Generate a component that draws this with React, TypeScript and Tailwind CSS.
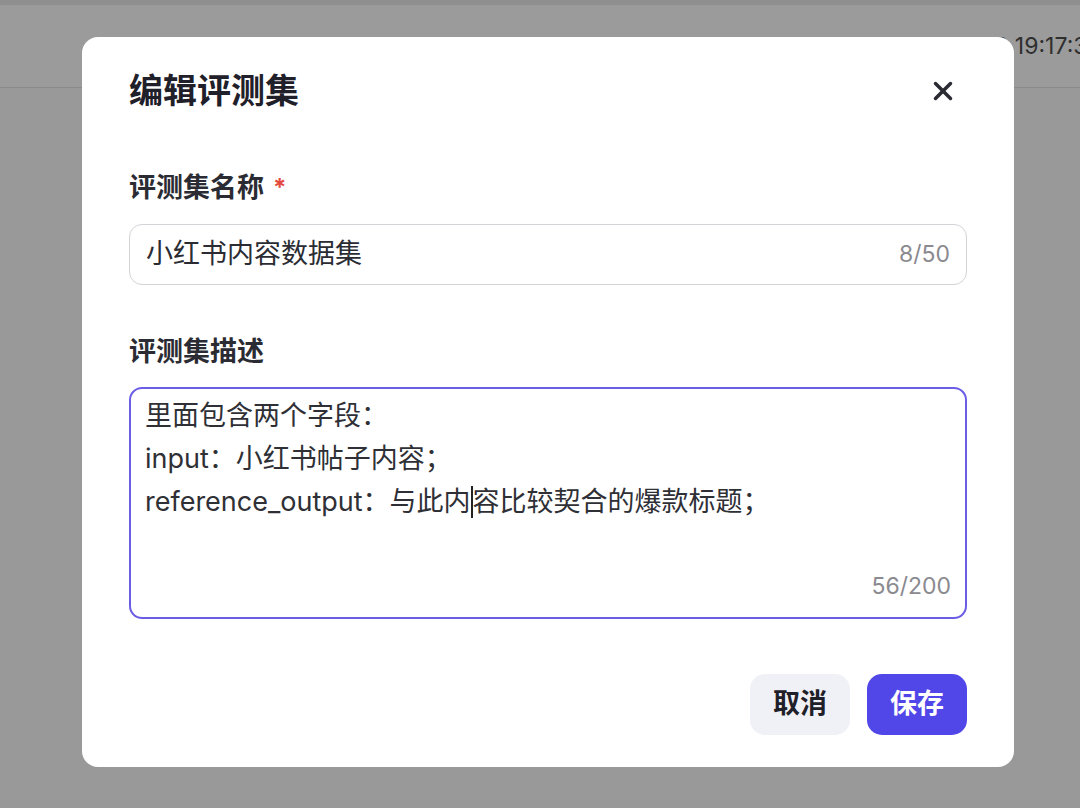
import { X } from "lucide-react";

const font = { fontFamily: "Inter, 'Noto Sans CJK SC', sans-serif" };

const EditDatasetModal = () => {
    return (
        <div className="absolute left-[82px] top-[37px] w-[932px] h-[730px] bg-white rounded-[16px] px-[47px] pt-[34px] pb-[32px] flex flex-col">
            <div className="flex items-center justify-between h-[40px]">
                <h2 className="text-[34px] leading-[40px] font-bold text-[#1f2029]">编辑评测集</h2>
                <X className="w-[30px] h-[30px] text-[#2a2b33] mr-[9px]" strokeWidth={2.8} />
            </div>

            <label className="mt-[61px] h-[32px] text-[27px] leading-[32px] font-bold text-[#2b2c33] flex items-center">
                评测集名称
                <span className="ml-[9px] text-[#e5483d] text-[24px]">*</span>
            </label>
            <div className="mt-[20px] h-[61px] border-[1.5px] border-[#d3d3d8] rounded-[13px] flex items-center justify-between pl-[16px] pr-[16px]">
                <span className="text-[27px] text-[#2b2c33]">小红书内容数据集</span>
                <span className="text-[23px] text-[#8a8a8f]">8/50</span>
            </div>

            <label className="mt-[51px] h-[32px] text-[27px] leading-[32px] font-bold text-[#2b2c33]">评测集描述</label>
            <div className="mt-[19px] h-[232px] border-2 border-[#6b5de6] rounded-[13px] pl-[14px] pr-[14px] pt-[5px] flex flex-col">
                <div className="text-[27px] leading-[43px] text-[#2f3036]">
                    <div>里面包含两个字段：</div>
                    <div>input：小红书帖子内容；</div>
                    <div className="flex items-center">
                        reference_output：与此内
                        <span className="inline-block w-[2px] h-[32px] bg-[#222]" />
                        容比较契合的爆款标题；
                    </div>
                </div>
                <div className="mt-auto mb-[17px] self-end text-[23px] leading-[28px] text-[#8a8a8f]">56/200</div>
            </div>

            <div className="mt-[55px] flex justify-end gap-[17px]">
                <button className="w-[100px] h-[61px] rounded-[15px] bg-[#f0f1f6] text-[27px] font-bold text-[#1f2029]">取消</button>
                <button className="w-[100px] h-[61px] rounded-[15px] bg-[#5147e8] text-[27px] font-bold text-white">保存</button>
            </div>
        </div>
    );
};

export default function App() {
    return (
        <div className="relative w-[1080px] h-[808px] overflow-hidden bg-[#999999]" style={font}>
            <div className="h-[5px] bg-[#8f8f8f]" />
            <div className="h-[83px] border-b border-[#8a8a8a] bg-[#9b9b9b] flex items-center justify-end overflow-hidden">
                <span className="whitespace-nowrap text-[23px] text-[#2f2f2f] mr-[-22px]">2024-06-12 19:17:30</span>
            </div>
            <EditDatasetModal />
        </div>
    );
}
